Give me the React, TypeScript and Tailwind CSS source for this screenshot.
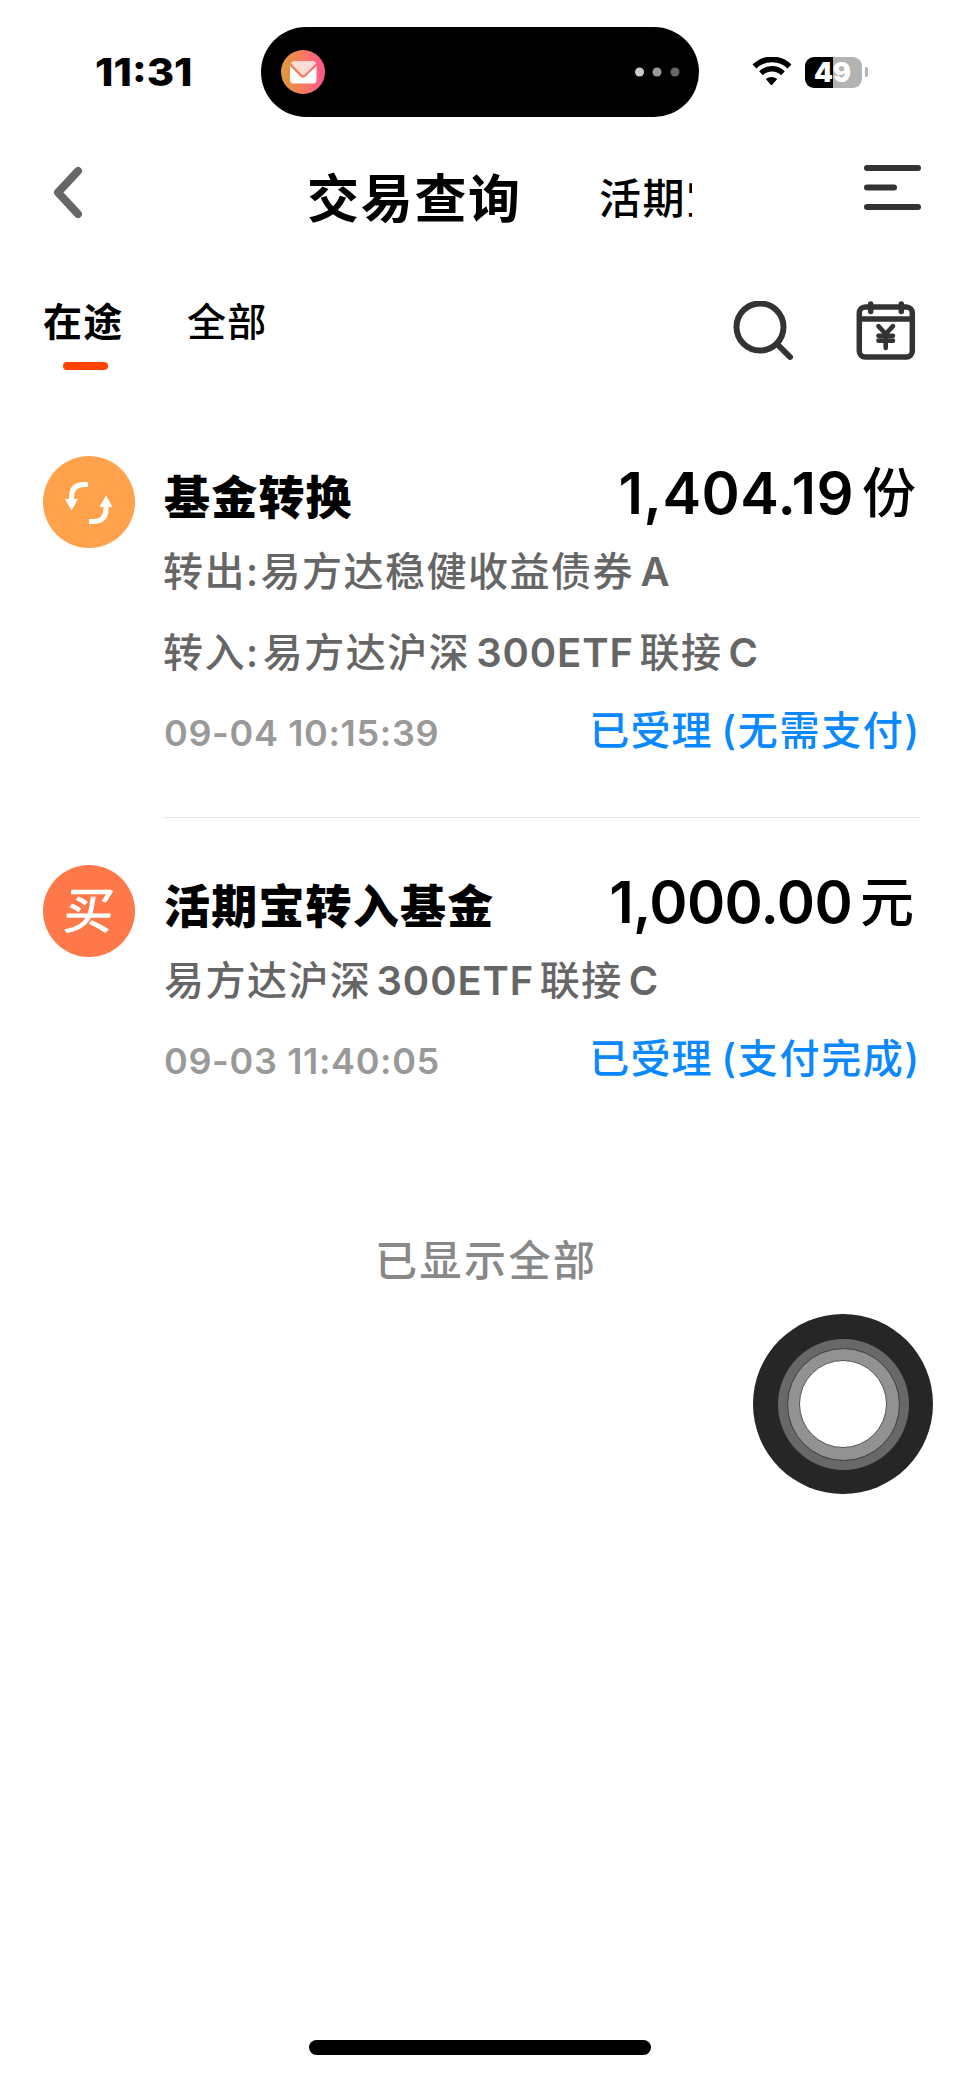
import type { ReactNode } from "react";
import { JapaneseYen } from "lucide-react";

type Transaction = {
  kind: "convert" | "buy";
  title: string;
  amount: ReactNode;
  time: string;
  status: [string, string];
};

function StatusBar() {
  return (
    <div className="flex h-[117px] pt-[27px]">
      <div className="flex h-[90px] w-[261px] items-center pl-[95px]">
        <span className="origin-left scale-x-110 text-[38px] leading-none font-extrabold">11:31</span>
      </div>
      <div className="flex h-[90px] w-[438px] items-center justify-between rounded-full bg-black pr-[19px] pl-[20px]">
        <svg width="44" height="44" viewBox="0 0 44 44">
          <defs>
            <linearGradient id="mail" x1="0" y1="0" x2="1" y2="0">
              <stop offset="0" stopColor="#dd9c3a" />
              <stop offset="0.55" stopColor="#fb7663" />
              <stop offset="1" stopColor="#ff5590" />
            </linearGradient>
          </defs>
          <circle cx="22" cy="22" r="22" fill="url(#mail)" />
          <path d="M9 16 L19.5 26.5 Q22 29 24.500 26.500 L35.500 16 V30 Q35.500 33.500 32 33.500 H12.500 Q9 33.500 9 30 Z" fill="#fff" />
          <path d="M10 13.500 Q10.500 11 13 11 H32 Q34.500 11 35 13.500 L23.800 24.500 Q22.300 26 20.800 24.500 Z" fill="#ffdcd3" />
        </svg>
        <svg width="46" height="10" viewBox="0 0 46 10">
          <circle cx="5.500" cy="5" r="4.500" fill="#cbcbcb" />
          <circle cx="23" cy="5" r="4.500" fill="#999" />
          <circle cx="41" cy="5" r="4.500" fill="#666" />
        </svg>
      </div>
      <div className="flex h-[90px] items-center pl-[53px]">
        <svg width="40" height="30" viewBox="0 0 40 30">
          <path d="M2.500 9.500 A25 25 0 0 1 37.500 9.500" fill="none" stroke="#000" strokeWidth="5.600" />
          <path d="M9 16.200 A16 16 0 0 1 31 16.200" fill="none" stroke="#000" strokeWidth="5.400" />
          <path d="M13.800 22 A9 9 0 0 1 25.200 22 L20.500 27.600 Q19.500 28.600 18.500 27.600 Z" fill="#000" />
        </svg>
        <div className="ml-[13px] flex h-[31px] w-[57px] items-center justify-center rounded-[9px] bg-[linear-gradient(90deg,#000_28px,#b3b3b3_28px)] pr-[2px] text-[27px] leading-none font-black text-white">
          49
        </div>
        <div className="ml-[3px] h-[10px] w-[3px] rounded-r-full bg-[#b3b3b3]" />
      </div>
    </div>
  );
}

function Header() {
  return (
    <header className="flex h-[153px] items-start">
      <svg className="mt-[48px] ml-[48px]" width="40" height="56" viewBox="0 0 40 56">
        <path d="M30 6 L10 27.500 L30 49" fill="none" stroke="#666" strokeWidth="8" strokeLinecap="round" strokeLinejoin="round" />
      </svg>
      <h1 className="mt-[51px] ml-[219px] w-[216px] text-[52px] leading-[64px] font-bold tracking-[1.7px] whitespace-nowrap">交易查询</h1>
      <div className="mt-[50px] ml-[76px] w-[93px] overflow-hidden text-[42px] leading-[64px] font-medium tracking-[1.500px] whitespace-nowrap">活期宝</div>
      <svg className="mt-[44px] ml-[170px]" width="61" height="52" viewBox="0 0 61 52">
        <g stroke="#333" strokeWidth="6" strokeLinecap="round">
          <path d="M5 7 H56" />
          <path d="M5 26.500 H32" />
          <path d="M5 46 H56" />
        </g>
      </svg>
    </header>
  );
}

function Tabs() {
  return (
    <nav className="flex h-[130px] items-start pt-[31px] pl-[44px]">
      <div className="flex w-[81px] flex-col">
        <span className="-ml-px text-[39px] leading-[41px] font-bold tracking-[1.200px]">在途</span>
        <span className="mt-[20px] ml-[19px] h-[8px] w-[45px] rounded-full bg-[#ff4400]" />
      </div>
      <span className="ml-[62px] w-[82px] text-[39px] leading-[41px] font-medium tracking-[1.200px]">全部</span>
      <svg className="ml-[461px]" width="66" height="64" viewBox="0 0 66 64">
        <circle cx="30" cy="26" r="23.500" fill="none" stroke="#333" strokeWidth="6" />
        <path d="M47.500 43.500 L60 56" stroke="#333" strokeWidth="6" strokeLinecap="round" />
      </svg>
      <svg className="ml-[58px]" width="64" height="64" viewBox="0 0 64 64">
        <g fill="none" stroke="#333" strokeWidth="5.500">
          <rect x="5.300" y="6" width="53" height="50" rx="6" />
          <path d="M5 18 H59" />
          <path d="M16.700 3 V10.500 M47.300 3 V10.500" strokeLinecap="round" />
        </g>
        <JapaneseYen x="17.200" y="21.500" width="29" height="29" color="#333" strokeWidth={3.800} />
      </svg>
    </nav>
  );
}

function KindIcon({ kind }: { kind: Transaction["kind"] }) {
  if (kind === "buy") {
    return (
      <div className="mt-[-5px] flex size-[92px] items-center justify-center rounded-full bg-[#ff784a]">
        <span className="-skew-x-6 text-[50px] leading-none font-medium text-white">买</span>
      </div>
    );
  }
  return (
    <svg className="mt-[-5px]" width="92" height="92" viewBox="0 0 92 92">
      <circle cx="46" cy="46" r="46" fill="#ffa24b" />
      <g fill="none" stroke="#fff" strokeWidth="5">
        <path d="M45 28.500 H41 Q28.500 28.500 28.500 41 V45" />
        <path d="M46 65.500 H50 Q63 65.500 63 53 V49" />
      </g>
      <path d="M22 43 H35 L28.500 54.500 Z M56.500 51 H69.500 L63 39.500 Z" fill="#fff" />
    </svg>
  );
}

function Row({ item, children }: { item: Transaction; children: ReactNode }) {
  return (
    <div className="flex pl-[43px]">
      <KindIcon kind={item.kind} />
      <div className="ml-[29px] w-[756px]">
        <div className="flex h-[70px] items-start justify-between pr-[4px]">
          <h2 className="text-[46px] leading-[72px] font-extrabold tracking-[1.200px]">{item.title}</h2>
          <div className="flex items-start leading-[65px] font-semibold">{item.amount}</div>
        </div>
        <div className="text-[40px] leading-[81px] font-medium text-[#666]">{children}</div>
        <div className="flex h-[79px] items-center justify-between">
          <time className="text-[36px] font-semibold tracking-[0.650px] text-[#999]">{item.time}</time>
          <div className="mt-[-3px] mr-[-1px] flex text-[40px] font-medium text-[#0a88ff]">
            <span className="tracking-[1.200px]">{item.status[0]}</span>
            <span className="ml-[8.500px] tracking-[1.700px]">{item.status[1]}</span>
          </div>
        </div>
      </div>
    </div>
  );
}

function AssistiveTouch() {
  return (
    <div className="absolute top-[1314px] left-[753px] flex size-[180px] items-center justify-center rounded-full bg-[#262626]">
      <div className="flex size-[131px] items-center justify-center rounded-full bg-[#686868]">
        <div className="flex size-[113px] items-center justify-center rounded-full border border-[#3c3c3c] bg-[#929292]">
          <div className="size-[88px] rounded-full border border-[#555] bg-white" />
        </div>
      </div>
    </div>
  );
}

export default function App() {
  return (
    <div className="relative flex h-[2079px] w-[960px] flex-col bg-white text-black [font-family:Inter,'Noto_Sans_CJK_SC',sans-serif]">
      <StatusBar />
      <Header />
      <Tabs />
      <main className="pt-[61px]">
        <Row
          item={{
            kind: "convert",
            title: "基金转换",
            amount: (
              <>
                <span className="text-[58px] tracking-[0.500px]">1,404.19</span>
                <span className="ml-[8px] text-[54px] font-medium">份</span>
              </>
            ),
            time: "09-04 10:15:39",
            status: ["已受理", "(无需支付)"],
          }}
        >
          <div className="-ml-px flex">
            <span className="tracking-[1.500px]">转出</span>
            <span>:</span>
            <span className="ml-[2.400px] tracking-[1.500px]">易方达稳健收益债券</span>
            <span className="ml-[6.500px] font-semibold">A</span>
          </div>
          <div className="-ml-px flex">
            <span className="tracking-[1.500px]">转入</span>
            <span>:</span>
            <span className="ml-[4.500px] tracking-[1.500px]">易方达沪深</span>
            <span className="ml-[6px] font-semibold tracking-[0.900px]">300ETF</span>
            <span className="ml-[5.500px] tracking-[1.500px]">联接</span>
            <span className="ml-[6px] font-semibold">C</span>
          </div>
        </Row>
        <div className="mt-[45px] ml-[163px] h-px w-[757px] bg-[#e6e6e6]" />
        <div className="h-[52px]" />
        <Row
          item={{
            kind: "buy",
            title: "活期宝转入基金",
            amount: (
              <>
                <span className="text-[58px] tracking-[-0.650px]">1,000.00</span>
                <span className="mr-[2px] ml-[8px] text-[54px] font-medium">元</span>
              </>
            ),
            time: "09-03 11:40:05",
            status: ["已受理", "(支付完成)"],
          }}
        >
          <div className="flex">
            <span className="tracking-[1.500px]">易方达沪深</span>
            <span className="ml-[5px] font-semibold tracking-[0.900px]">300ETF</span>
            <span className="ml-[5.500px] tracking-[1.500px]">联接</span>
            <span className="ml-[6px] font-semibold">C</span>
          </div>
        </Row>
        <p className="pt-[129px] pl-[375px] text-[42px] leading-[64px] font-medium tracking-[2.500px] text-[#888]">已显示全部</p>
      </main>
      <AssistiveTouch />
      <div className="mt-auto mb-[24px] ml-[309px] h-[15px] w-[342px] rounded-full bg-black" />
    </div>
  );
}
